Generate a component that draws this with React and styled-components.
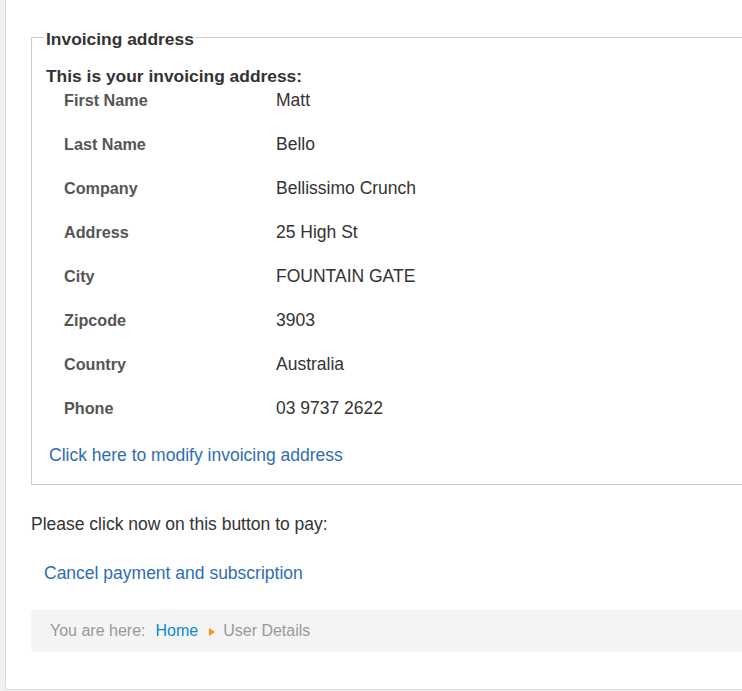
import styled, { createGlobalStyle } from 'styled-components';

const GlobalStyle = createGlobalStyle`
  html, body {
    margin: 0;
    padding: 0;
    overflow: hidden;
    background: #eef0f1;
    font-family: "Liberation Sans", Arial, sans-serif;
    font-size: 17.5px;
    color: #333;
  }
`;

const fields = [
  ['First Name', 'Matt'],
  ['Last Name', 'Bello'],
  ['Company', 'Bellissimo Crunch'],
  ['Address', '25 High St'],
  ['City', 'FOUNTAIN GATE'],
  ['Zipcode', '3903'],
  ['Country', 'Australia'],
  ['Phone', '03 9737 2622'],
];

const App = () => {
  return (
    <>
      <GlobalStyle />
      <Panel>
        <Fieldset>
          <Legend>Invoicing address</Legend>
          <Heading>This is your invoicing address:</Heading>
          <Details>
            {fields.map(([label, value]) => (
              <Row key={label}>
                <Label>{label}</Label>
                <Value>{value}</Value>
              </Row>
            ))}
          </Details>
          <Link href="#">Click here to modify invoicing address</Link>
        </Fieldset>

        <Notice>Please click now on this button to pay:</Notice>
        <CancelLink href="#">Cancel payment and subscription</CancelLink>

        <Breadcrumb>
          <Muted>You are here:</Muted>
          <Crumb href="#">Home</Crumb>
          <Divider />
          <Muted>User Details</Muted>
        </Breadcrumb>
      </Panel>
    </>
  );
};

export default App;

const Panel = styled.div`
  box-sizing: border-box;
  width: 800px;
  margin-left: 5px;
  padding: 25px 0 37px 25px;
  background: #fff;
  border: 1px solid #dcdcdc;
  border-top: none;
  border-bottom-left-radius: 4px;
`;

const Fieldset = styled.fieldset`
  margin: 0;
  padding: 0 14px 18px 14px;
  border: 1px solid #ccc;
  min-width: 0;
`;

const Legend = styled.legend`
  margin-left: -2px;
  padding: 4px 2px 0;
  font-size: 17.4px;
  line-height: 20px;
  font-weight: 700;
  color: #333;
`;

const Heading = styled.h4`
  margin: 17px 0 4px;
  font-size: 17.4px;
  line-height: 20px;
  font-weight: 700;
  color: #333;
`;

const Details = styled.div`
  display: flex;
  flex-direction: column;
  padding-left: 18px;
`;

const Row = styled.div`
  display: grid;
  grid-template-columns: 212px 1fr;
  height: 44px;
  line-height: 20px;
`;

const Label = styled.span`
  font-size: 16.2px;
  font-weight: 700;
  color: #555;
`;

const Value = styled.span`
  color: #333;
`;

const Link = styled.a`
  display: inline-block;
  margin: 3px 0 0 3px;
  line-height: 20px;
  color: #2d6db4;
  text-decoration: none;
`;

const Notice = styled.p`
  margin: 29px 0 0;
  line-height: 20px;
  color: #333;
`;

const CancelLink = styled.a`
  display: inline-block;
  margin: 29px 0 0 13px;
  line-height: 20px;
  color: #2d6db4;
  text-decoration: none;
`;

const Breadcrumb = styled.div`
  display: flex;
  align-items: center;
  height: 42px;
  margin-top: 26px;
  padding-left: 19px;
  background: #f4f4f4;
  border-radius: 4px 0 0 4px;
  font-size: 16px;
  line-height: 20px;
`;

const Muted = styled.span`
  color: #999;
`;

const Crumb = styled.a`
  margin-left: 10px;
  color: #0c8ad1;
  text-decoration: none;
`;

const Divider = styled.span`
  width: 0;
  height: 0;
  margin: 2px 8px 0 11px;
  border-top: 4px solid transparent;
  border-bottom: 4px solid transparent;
  border-left: 6px solid #f7941d;
`;
